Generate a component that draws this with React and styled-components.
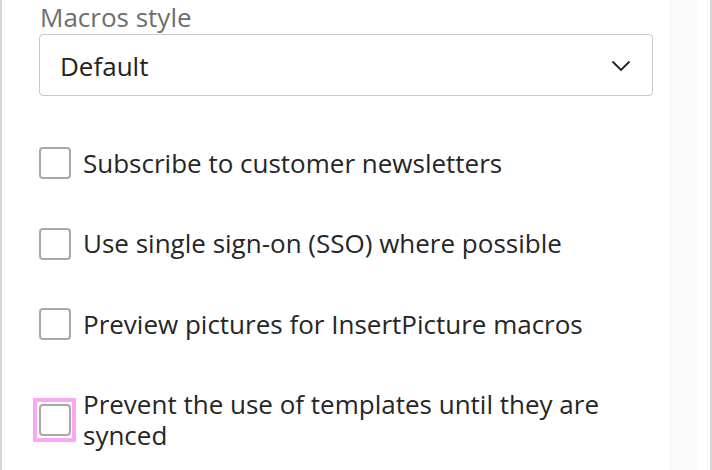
import React from 'react';
import styled, { createGlobalStyle } from 'styled-components';

const GlobalStyle = createGlobalStyle`
  html, body {
    margin: 0;
    padding: 0;
    background: #fff;
  }
  body {
    font-family: 'Open Sans', 'Noto Sans', sans-serif;
    color: #262626;
  }
`;

const Frame = styled.div`
  display: flex;
  width: 712px;
  height: 470px;
  overflow: hidden;
  border-left: 2px solid #d6d6d6;
  border-right: 2px solid #d6d6d6;
  box-sizing: border-box;
`;

const Content = styled.div`
  flex: 1;
  padding: 2px 16px 0 37px;
  box-sizing: border-box;
`;

const ScrollTrack = styled.div`
  width: 29px;
  background: #fafafa;
`;

const Gutter = styled.div`
  width: 12px;
  background: #fff;
`;

const FieldLabel = styled.div`
  font-size: 26px;
  line-height: 30px;
  color: #6e6e6e;
  padding-left: 1px;
  margin-bottom: 2px;
`;

const Select = styled.div`
  display: flex;
  align-items: center;
  justify-content: space-between;
  height: 62px;
  border: 1px solid #c8c8c8;
  border-radius: 4px;
  padding: 1px 21px 0 20px;
  box-sizing: border-box;
  font-size: 26px;
  color: #222;
`;

const OptionList = styled.div`
  display: flex;
  flex-direction: column;
  gap: 48.5px;
  margin-top: 51px;
`;

const Row = styled.label`
  display: flex;
  align-items: center;
  gap: 12px;
  font-size: 26px;
  line-height: 31px;
  color: #262626;
`;

const Box = styled.span`
  position: relative;
  flex: none;
  width: 32px;
  height: 32px;
  border: 2px solid #a8a8a8;
  border-radius: 4px;
  box-sizing: border-box;

  &::after {
    content: '';
    display: ${p => (p.$focused ? 'block' : 'none')};
    position: absolute;
    inset: -8px -7px -8px -8px;
    border: 4px solid #f9a9f3;
  }
`;

const Chevron = () => (
  <svg width="20" height="12" viewBox="0 0 20 12" fill="none">
    <path d="M1.5 1.5 L10 10 L18.5 1.5" stroke="#222" strokeWidth="1.8" />
  </svg>
);

const options = [
  'Subscribe to customer newsletters',
  'Use single sign-on (SSO) where possible',
  'Preview pictures for InsertPicture macros',
  'Prevent the use of templates until they are synced',
];

export default function App() {
  return (
    <>
      <GlobalStyle />
      <Frame>
        <Content>
          <FieldLabel>Macros style</FieldLabel>
          <Select>
            <span>Default</span>
            <Chevron />
          </Select>
          <OptionList>
            {options.map((text, i) => (
              <Row key={text}>
                <Box $focused={i === options.length - 1} />
                <span>{text}</span>
              </Row>
            ))}
          </OptionList>
        </Content>
        <ScrollTrack />
        <Gutter />
      </Frame>
    </>
  );
}
